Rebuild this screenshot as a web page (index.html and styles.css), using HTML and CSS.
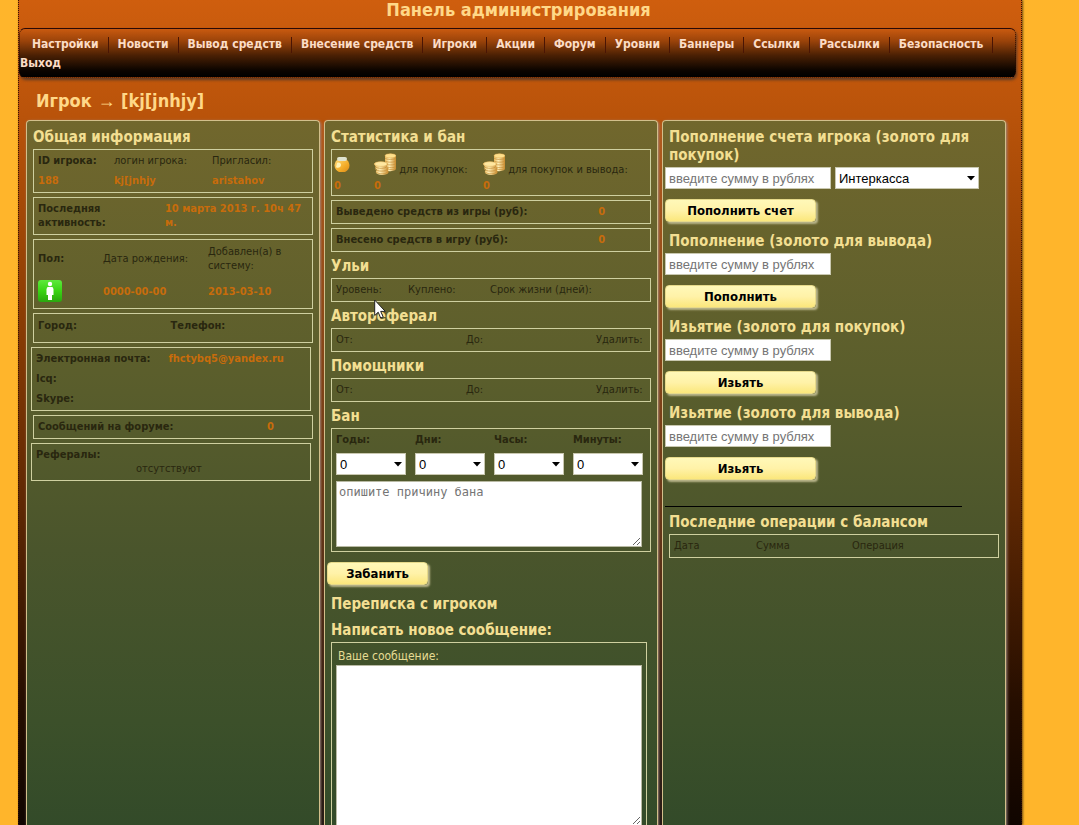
FILE: index.html
```html
<!DOCTYPE html>
<html lang="ru">
<head>
<meta charset="utf-8">
<title>Панель администрирования</title>
<link rel="stylesheet" href="styles.css">
</head>
<body>
<svg class="defs" width="0" height="0" aria-hidden="true">
  <defs>
    <linearGradient id="gold" x1="0" x2="1" y1="0" y2="0">
      <stop offset="0" stop-color="#e9b85a"/><stop offset=".4" stop-color="#fff0b8"/><stop offset="1" stop-color="#c98a2c"/>
    </linearGradient>
    <linearGradient id="honey" x1="0" x2="1" y1="0" y2="1">
      <stop offset="0" stop-color="#ffd873"/><stop offset=".6" stop-color="#f3ab26"/><stop offset="1" stop-color="#d98a1c"/>
    </linearGradient>
    <linearGradient id="green" x1="0" x2="0" y1="0" y2="1">
      <stop offset="0" stop-color="#5de93c"/><stop offset=".5" stop-color="#3ad414"/><stop offset="1" stop-color="#2aa60f"/>
    </linearGradient>
    <symbol id="coins" viewBox="0 0 24 24">
      <path fill="url(#gold)" d="M12 3c0-3 12-3 12 0v14c0 3-9 4-12 2z"/>
      <path fill="none" stroke="#c8913a" stroke-width=".8" d="M12 5.500c1 2 11 2 12 0M12 8.500c1 2 11 2 12 0M12 11.500c1 2 11 2 12 0M13 14.500c2 2 10 2 11 0M15 17.500c2 1 8 1 9-1"/>
      <ellipse cx="18" cy="3" rx="6" ry="2.300" fill="#ffe08c" stroke="#d9a548" stroke-width=".5"/>
      <path fill="url(#gold)" d="M0 12c0-3 15-3 15 0l-1 3c2 1 2 2 1 3l1 3c-1 4-13 4-14 0l1-3c-2-1-2-2-1-3z"/>
      <path fill="none" stroke="#c8913a" stroke-width=".8" d="M1 14.500c2 3 12 3 13 0M1 17.500c2 3 13 3 14 0M2 20.500c2 3 12 3 13 0"/>
      <ellipse cx="7.500" cy="12" rx="7" ry="2.600" fill="#ffe7a0" stroke="#d9a548" stroke-width=".5"/>
    </symbol>
  </defs>
</svg>
<div class="page">
  <h1 class="title">Панель администрирования</h1>
  <nav>
    <ul class="menu">
      <li><a href="#">Настройки</a></li>
      <li><a href="#">Новости</a></li>
      <li><a href="#">Вывод средств</a></li>
      <li><a href="#">Внесение средств</a></li>
      <li><a href="#">Игроки</a></li>
      <li><a href="#">Акции</a></li>
      <li><a href="#">Форум</a></li>
      <li><a href="#">Уровни</a></li>
      <li><a href="#">Баннеры</a></li>
      <li><a href="#">Ссылки</a></li>
      <li><a href="#">Рассылки</a></li>
      <li><a href="#">Безопасность</a></li>
      <li><a href="#">Выход</a></li>
    </ul>
  </nav>
  <h2 class="player">Игрок <span class="arrow">→</span> [kj[jnhjy]</h2>

  <main class="columns">
    <section class="panel info">
      <h3>Общая информация</h3>
      <table class="box ids">
        <tr><th>ID игрока:</th><td>логин игрока:</td><td>Пригласил:</td></tr>
        <tr class="val"><td>188</td><td>kj[jnhjy</td><td>aristahov</td></tr>
      </table>
      <table class="box pair tall">
        <tr><th>Последняя активность:</th><td class="val">10 марта 2013 г. 10ч 47 м.</td></tr>
      </table>
      <table class="box born">
        <tr><th>Пол:</th><td>Дата рождения:</td><td>Добавлен(а) в систему:</td></tr>
        <tr class="val">
          <td><svg class="sex" viewBox="0 0 24 24" role="img" aria-label="мужской"><rect width="24" height="22" rx="3" fill="url(#green)"/><circle cx="12" cy="4" r="2.200" fill="#fff"/><path fill="#fff" d="M9.500 7h5l1 2v6h-1.500v5h-4v-5h-1.500v-6z"/></svg></td>
          <td>0000-00-00</td><td>2013-03-10</td>
        </tr>
      </table>
      <table class="box pair city">
        <tr><th>Город:</th><th>Телефон:</th></tr>
      </table>
      <table class="box pair contact shifted">
        <tr><th>Электронная почта:</th><td class="val">fhctybq5@yandex.ru</td></tr>
        <tr><th>Icq:</th><td></td></tr>
        <tr><th>Skype:</th><td></td></tr>
      </table>
      <table class="box count">
        <tr><th>Сообщений на форуме:</th><td class="val">0</td></tr>
      </table>
      <div class="box refs shifted">
        <strong>Рефералы:</strong>
        <span>отсутствуют</span>
      </div>
    </section>

    <section class="panel stats">
      <h3>Статистика и бан</h3>
      <table class="box money">
        <tr>
          <td><svg class="pot" viewBox="0 0 16 16" role="img" aria-label="мёд"><path fill="url(#honey)" d="M3 3h10c4 4 3 10-2 12H5C0 13-1 7 3 3z"/><rect x="3" y="0" width="10" height="4" rx="2" fill="#dfe3cf"/><path fill="#fff3b5" d="M3 6c2-1 4 0 4 2s-3 4-5 2z"/></svg></td>
          <td><svg class="coins" aria-hidden="true"><use href="#coins"/></svg> для покупок:</td>
          <td><svg class="coins" aria-hidden="true"><use href="#coins"/></svg> для покупок и вывода:</td>
        </tr>
        <tr class="val"><td>0</td><td>0</td><td>0</td></tr>
      </table>
      <table class="box count">
        <tr><th>Выведено средств из игры (руб):</th><td class="val">0</td></tr>
      </table>
      <table class="box count">
        <tr><th>Внесено средств в игру (руб):</th><td class="val">0</td></tr>
      </table>
      <h3>Ульи</h3>
      <table class="box hives"><tr><td>Уровень:</td><td>Куплено:</td><td>Срок жизни (дней):</td></tr></table>
      <h3>Автореферал</h3>
      <table class="box range"><tr><td>От:</td><td>До:</td><td>Удалить:</td></tr></table>
      <h3>Помощники</h3>
      <table class="box range"><tr><td>От:</td><td>До:</td><td>Удалить:</td></tr></table>
      <h3>Бан</h3>
      <form>
        <div class="box ban">
          <div class="terms">
            <label>Годы:<select><option>0</option></select></label>
            <label>Дни:<select><option>0</option></select></label>
            <label>Часы:<select><option>0</option></select></label>
            <label>Минуты:<select><option>0</option></select></label>
          </div>
          <textarea class="reason" placeholder="опишите причину бана" aria-label="Причина бана"></textarea>
        </div>
        <button type="button" class="small">Забанить</button>
      </form>
      <h3>Переписка с игроком</h3>
      <h3>Написать новое сообщение:</h3>
      <form class="box message">
        <label for="message">Ваше сообщение:</label>
        <textarea id="message"></textarea>
      </form>
    </section>

    <section class="panel balance">
      <form>
        <h3>Пополнение счета игрока (золото для покупок)</h3>
        <div class="fields">
          <input type="text" placeholder="введите сумму в рублях" aria-label="Сумма пополнения для покупок">
          <select aria-label="Платёжная система"><option>Интеркасса</option></select>
        </div>
        <button type="button">Пополнить счет</button>
      </form>
      <form>
        <h3>Пополнение (золото для вывода)</h3>
        <div class="fields"><input type="text" placeholder="введите сумму в рублях" aria-label="Сумма пополнения для вывода"></div>
        <button type="button">Пополнить</button>
      </form>
      <form>
        <h3>Изьятие (золото для покупок)</h3>
        <div class="fields"><input type="text" placeholder="введите сумму в рублях" aria-label="Сумма изъятия для покупок"></div>
        <button type="button">Изьять</button>
      </form>
      <form>
        <h3>Изьятие (золото для вывода)</h3>
        <div class="fields"><input type="text" placeholder="введите сумму в рублях" aria-label="Сумма изъятия для вывода"></div>
        <button type="button">Изьять</button>
      </form>
      <hr>
      <h3>Последние операции с балансом</h3>
      <table class="box ops"><tr><td>Дата</td><td>Сумма</td><td>Операция</td></tr></table>
    </section>
  </main>
</div>
<svg class="cursor" viewBox="0 0 12 20" aria-hidden="true"><path fill="#fff" stroke="#222" d="M.7 1v15.500l3.500-3.300 2.500 5.800 2.500-1.100-2.500-5.500h4.600z"/></svg>
</body>
</html>
```
FILE: styles.css
```css
* { box-sizing: border-box; }

body {
  margin: 0;
  height: 100vh;
  overflow: hidden;
  background: #ffb52b;
  color: #29270f;
  font: 11px/14px Tahoma, "DejaVu Sans Condensed", "DejaVu Sans", sans-serif;
}

h1, h2, h3 { margin: 0; color: #ffd888; }

.defs { position: absolute; }

.page {
  display: flex;
  flex-direction: column;
  height: 100vh;
  margin: 0 57px 0 18px;
  border: dotted #3a1204;
  border-width: 0 1px;
  background: linear-gradient(#cf5e0e, #b9530a 14%, #8f3f04 36%, #5d2703 62%, #260e00 85%, #100500);
  box-shadow: 1px 0 2px #6b4a12;
}

.title { padding: 0 3px 8px 0; font-size: 18px; line-height: 20px; text-align: center; }

.menu {
  display: flex;
  flex-wrap: wrap;
  margin: 0 5px 0 0;
  padding: 6px 0 4px;
  list-style: none;
  border: 1px dotted #2a0d02;
  border-top: 1px solid #2a0906;
  border-radius: 6px;
  background: linear-gradient(#c95a10, #9a430a 25%, #4a2004 55%, #0d0500 85%, #000);
  box-shadow: 1px 2px 3px #5c3a26;
  font-size: 12px;
  line-height: 19px;
}
.menu li { padding: 0 10px 0 9px; background: linear-gradient(#4a1504, #4a1504) right center / 1px 16px no-repeat; }
.menu li:first-child { padding-left: 12px; }
.menu li:last-child { padding: 0; background: none; }
.menu a { color: #fbdcc6; font-weight: bold; text-decoration: none; }

.player { padding: 11px 17px 7px; font-size: 18px; line-height: 23px; }
.arrow { font-family: "Liberation Serif", serif; font-weight: normal; }

.columns {
  flex: 1;
  display: grid;
  grid-template-columns: 294fr 334fr 344fr;
  gap: 4px;
  min-height: 0;
  margin: 0 15px 0 7px;
}

.panel {
  min-width: 0;
  padding: 2px 6px 0;
  border: 1px solid #d2bf8b;
  border-bottom: 0;
  border-radius: 4px 4px 0 0;
  background: linear-gradient(#71672d, #5b5e2c 35%, #4a552c 60%, #3c502a 84%, #324a29);
  box-shadow: 1px 1px 3px #a08a80;
}

h3 { padding: 5px 0 3px; color: #f3df92; font-size: 15px; line-height: 18px; }

.box {
  width: 100%;
  margin: 0 0 4px;
  padding: 1px;
  border: 1px solid #cfd0a0;
  border-spacing: 0;
  table-layout: fixed;
}
.box:has(+ h3) { margin-bottom: 0; }
.box td, .box th { height: 20px; padding: 0 3px; text-align: left; }
.box .val, .box .val td { color: #c76c0b; font-weight: bold; }
.shifted { position: relative; left: -2px; }

.ids td:first-child, .ids th { width: 76px; }
.ids td:nth-child(2) { width: 98px; }
.pair th:first-child { width: 46%; }
.pair.tall td, .pair.tall th { height: 34px; }
.pair.city th:first-child { width: 48%; }
.pair.contact th:first-child { width: 48%; }
.city th { height: 26px; padding-bottom: 4px; }
.contact td, .contact th { white-space: nowrap; }
.born th { width: 65px; height: 36px; }
.born td:nth-child(2) { width: 105px; }
.born .val td { height: 30px; }
.sex { display: block; width: 24px; height: 24px; }
.count th { width: 83%; }
.refs { padding: 4px; }
.refs strong, .refs span { display: block; }
.refs span { padding-left: 100px; }

.money td:first-child { width: 40px; }
.money td:nth-child(2) { width: 109px; }
.money td { height: 27px; padding: 0 1px; white-space: nowrap; }
.money .val td { height: 16px; }
.pot { display: block; width: 16px; height: 16px; }
.coins { width: 22px; height: 24px; vertical-align: -3px; }
.hives td:first-child { width: 72px; }
.hives td:nth-child(2) { width: 82px; }
.range td:first-child, .range td:nth-child(2) { width: 130px; }
.range td { white-space: nowrap; }

.ban { padding: 4px; }
.terms { display: flex; gap: 9px; margin-bottom: 6px; font-weight: bold; }
.terms label { width: 70px; }
.terms select { display: block; width: 100%; margin-top: 6px; }

input, select {
  height: 22px;
  padding: 0 3px;
  border: 1px solid #c9c8b0;
  border-radius: 0;
  background-color: #fff;
  color: #000;
  font: 13px "Liberation Sans", Arial, sans-serif;
}
select {
  appearance: none;
  background: #fff url("data:image/svg+xml,%3Csvg xmlns='http://www.w3.org/2000/svg' width='8' height='5'%3E%3Cpath d='M0 0h8L4 4.500z'/%3E%3C/svg%3E") right 3px center no-repeat;
}
::placeholder { color: #757575; opacity: 1; }

textarea {
  display: block;
  width: 306px;
  max-width: 100%;
  height: 66px;
  padding: 2px;
  border: 1px solid #b9baa4;
  background: #fff;
  font: 12px/16px "DejaVu Sans Mono", monospace;
}

button {
  display: block;
  width: 151px;
  height: 23px;
  margin: 10px 0 5px -4px;
  padding: 0;
  border: 1px solid #e6d98a;
  border-radius: 4px;
  background: linear-gradient(#fff8b8, #fff2a8 50%, #fbe77c);
  box-shadow: 2px 2px 2px #b9b58a;
  color: #000;
  font: bold 12px Tahoma, "DejaVu Sans Condensed", "DejaVu Sans", sans-serif;
}
.small { width: 101px; }

.message { width: 316px; padding: 4px; color: #e6dc94; font-size: 12px; }
.message label { display: block; padding: 2px; }
.message textarea { height: 161px; }

.fields { display: flex; gap: 4px; margin-left: -4px; }
.fields input { width: 166px; }
.fields select { width: 144px; }
hr { width: 90%; margin: 26px 0 1px -4px; border: 0; border-top: 1px solid #000; }
.ops td:first-child { width: 82px; }
.ops td:nth-child(2) { width: 96px; }

button { font-size: 13px; }

.cursor { position: absolute; left: 374px; top: 299px; width: 12px; height: 20px; }
```
